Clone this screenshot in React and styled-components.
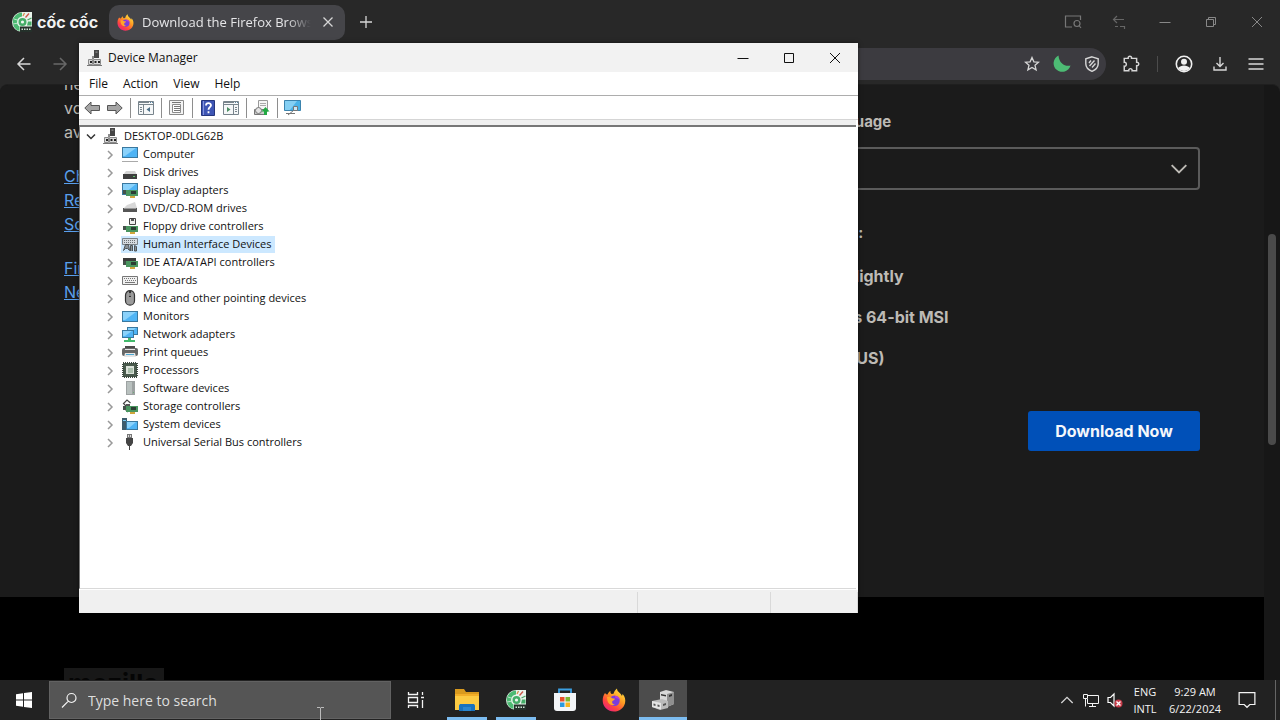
import styled, { createGlobalStyle, css } from "styled-components";

const GlobalStyle = createGlobalStyle`
  * { box-sizing: border-box; }
  body {
    margin: 0;
    font-family: "Open Sans", "Noto Sans", sans-serif;
    background: #000;
  }
  button, input, select { font: inherit; color: inherit; }
  button { border: 0; padding: 0; background: none; }
  svg { display: block; flex: none; }
  ul, dl, dd, p { margin: 0; padding: 0; }
`;

const center = css`
  display: flex;
  align-items: center;
  justify-content: center;
`;

const Desktop = styled.div`
  position: relative;
  display: flex;
  flex-direction: column;
  height: 100vh;
  overflow: hidden;
`;

/* ---------- browser ---------- */

const Browser = styled.div`
  flex: 1;
  min-height: 0;
  display: flex;
  flex-direction: column;
  background: #282828;
`;

const TabStrip = styled.div`
  display: flex;
  align-items: center;
  height: 44px;
  padding-left: 11px;
`;

const Brand = styled.div`
  display: flex;
  align-items: center;
  gap: 4px;
  width: 98px;
  color: #f2f2f2;
  font: 700 16px/24px Inter, sans-serif;
  white-space: nowrap;
`;

const Tab = styled.div`
  display: flex;
  align-items: center;
  width: 236px;
  height: 35px;
  padding: 0 8px;
  border-radius: 10px;
  background: #454549;
  color: #e6e6e8;
`;

const TabTitle = styled.span`
  flex: 1;
  margin: 0 8px;
  overflow: hidden;
  white-space: nowrap;
  font-size: 13px;
  mask-image: linear-gradient(to right, #000 86%, transparent);
`;

const IconButton = styled.button`
  ${center}
  flex: none;
  width: ${(props) => props.$width || 20}px;
  height: ${(props) => props.$height || 20}px;
  color: ${(props) => props.$color || "#d6d6d6"};
`;

const Spacer = styled.div`
  flex: 1;
`;

const NavBar = styled.div`
  display: flex;
  align-items: center;
  height: 40px;
  padding: 0 9px 0 6px;
`;

const UrlBar = styled.div`
  flex: 1;
  display: flex;
  align-items: center;
  justify-content: flex-end;
  height: 32px;
  margin-left: 60px;
  border-radius: 16px;
  background: #3c3b40;
`;

const Divider = styled.span`
  width: 1px;
  height: 16px;
  margin: 0 11px 0 1px;
  background: #4c4c4c;
`;

const Viewport = styled.div`
  flex: 1;
  min-height: 0;
  display: flex;
  overflow: hidden;
  border-top: 1px solid #1f1f1f;
  border-radius: 8px 8px 0 0;
  background: #171717;
`;

const Page = styled.div`
  flex: 1;
  overflow: hidden;
`;

const Columns = styled.main`
  display: grid;
  grid-template-columns: 1fr 1fr;
  gap: 64px;
  height: 512px;
  padding: 0 64px;
  background: #1b1b1b;
  color: #bdbab5;
  font: 16px/24px Inter, sans-serif;
`;

const Intro = styled.div`
  margin-top: -13px;
  p, ul { margin-bottom: 20px; }
  ul { list-style: none; }
  a { color: #5aa0ee; }
`;

const Form = styled.form`
  padding-top: 25px;
`;

const Label = styled.label`
  display: block;
  font-size: 15px;
  font-weight: 700;
`;

const SelectBox = styled.div`
  display: grid;
  align-items: center;
  margin: 13px 0 31px;
  select, svg { grid-area: 1 / 1; }
  svg { justify-self: end; margin-right: 12px; pointer-events: none; }
`;

const Select = styled.select`
  appearance: none;
  height: 43px;
  padding: 0 12px;
  border: 2px solid #5b5b5b;
  border-radius: 4px;
  background: #1b1b1b;
`;

const Summary = styled.dl`
  display: grid;
  grid-template-columns: 125px 1fr;
  row-gap: 17px;
  margin: 19px 0 41px;
  dd { font-weight: 700; }
`;

const Download = styled.button`
  display: block;
  width: 172px;
  height: 40px;
  margin-left: auto;
  border-radius: 3px;
  background: #0050b8;
  color: #f4f7fb;
  font-weight: 700;
`;

const Footer = styled.footer`
  height: 84px;
  padding: 71px 64px 0;
  background: #000;
  overflow: hidden;
`;

const FooterLogo = styled.div`
  width: 100px;
  height: 32px;
  padding-left: 4px;
  background: #181818;
  color: #050505;
  font: 700 26px/32px Inter, sans-serif;
`;

const ScrollTrack = styled.div`
  display: flex;
  justify-content: center;
  width: 16px;
  padding-top: 149px;
`;

const ScrollThumb = styled.div`
  width: 8px;
  height: 211px;
  border-radius: 4px;
  background: #4a4a4a;
`;

/* ---------- device manager ---------- */

const Window = styled.section`
  position: absolute;
  left: 79px;
  top: 43px;
  display: flex;
  flex-direction: column;
  width: 779px;
  height: 570px;
  background: #fff;
  color: #111;
  font-size: 11px;
  box-shadow: 0 0 4px rgba(0, 0, 0, 0.6);
`;

const TitleBar = styled.header`
  display: flex;
  align-items: center;
  height: 29px;
  padding-left: 8px;
  background: #f2f2f2;
`;

const Caption = styled.span`
  flex: 1;
  margin-left: 5px;
  font-size: 12px;
`;

const MenuBar = styled.nav`
  display: flex;
  align-items: center;
  gap: 15px;
  height: 24px;
  padding-left: 10px;
  border-bottom: 1px solid #adadad;
  font-size: 12px;
`;

const ToolBar = styled.div`
  display: flex;
  align-items: center;
  height: 24px;
  padding-left: 1px;
  border-bottom: 1px solid #d5d5d5;
`;

const ToolDivider = styled.span`
  width: 1px;
  height: 20px;
  margin: 0 3px 0 4px;
  background: #8e8e8e;
`;

const TreePane = styled.div`
  flex: 1;
  margin: 5px 2px 1px 0;
  border: 1px solid #777;
  border-top-width: 2px;
  border-right: 0;
  border-bottom-color: #d9d9d9;
  outline: 5px solid #f0f0f0;
  clip-path: inset(-5px 0 0 0);
`;

const Tree = styled.ul`
  list-style: none;
  padding-left: ${(props) => (props.$nested ? 19 : 3)}px;
`;

const Row = styled.div`
  display: flex;
  align-items: center;
  height: 18px;
`;

const Node = styled.span`
  display: flex;
  align-items: center;
  gap: 5px;
  height: 17px;
  margin-left: 3px;
  padding: 0 4px 0 1px;
  background: ${(props) => (props.$selected ? "#cce8ff" : "none")};
  white-space: nowrap;
`;

const NodeName = styled.span`
  line-height: 15px;
  padding-bottom: 2px;
`;

const StatusBar = styled.footer`
  display: grid;
  grid-template-columns: 1fr 133px 87px;
  height: 23px;
  background: #f0f0f0;
  span { border-right: 1px solid #d9d9d9; margin-top: 2px; }
`;

/* ---------- taskbar ---------- */

const TaskBar = styled.footer`
  display: flex;
  align-items: stretch;
  height: 40px;
  background: #222;
  color: #f3f3f3;
`;

const SearchBox = styled.label`
  display: flex;
  align-items: center;
  gap: 11px;
  width: 342px;
  margin: 1px;
  padding-left: 11px;
  border: 1px solid #626262;
  background: #555;
  input {
    flex: 1;
    min-width: 0;
    padding: 0;
    border: 0;
    outline: 0;
    background: none;
    font-size: 14px;
  }
  input::placeholder { color: #dedede; opacity: 1; }
`;

const Apps = styled.div`
  display: flex;
  gap: 1px;
  margin-left: 3px;
`;

const TaskButton = styled.button`
  ${center}
  width: 48px;
  background: ${(props) =>
    props.$active
      ? "linear-gradient(#7cbcf0, #7cbcf0) bottom / 48px 3px no-repeat #4c4c4c"
      : props.$open
        ? "linear-gradient(#7cbcf0, #7cbcf0) bottom / 40px 3px no-repeat"
        : "none"};
`;

const TrayText = styled.button`
  width: ${(props) => props.$width}px;
  font-size: 11px;
  line-height: 17px;
  text-align: center;
`;

const PeekEdge = styled.button`
  width: 5px;
  margin-left: 8px;
  border-left: 1px solid #666;
`;

const Pointer = styled.svg`
  position: absolute;
  left: 316px;
  bottom: -5px;
`;

/* ---------- drawings ---------- */

const Line = ({ d, size = 16, box = 16, w = 1 }) => (
  <svg width={size} height={size} viewBox={`0 0 ${box} ${box}`} fill="none" stroke="currentColor" strokeWidth={w}>
    <path d={d} />
  </svg>
);

const Firefox = ({ size }) => (
  <svg width={size} height={size} viewBox="0 0 24 24">
    <defs>
      <linearGradient id="flame" x1="0.85" y1="0.05" x2="0.2" y2="0.95">
        <stop offset="0" stopColor="#ffe545" />
        <stop offset="0.4" stopColor="#ff9a22" />
        <stop offset="0.75" stopColor="#ff4340" />
        <stop offset="1" stopColor="#e8247c" />
      </linearGradient>
    </defs>
    <path fill="url(#flame)" d="M3 5c1 1 1.700 1.500 2.500 1.500C6 5 7 3.500 8.500 3c-.3 1.200 0 2.200 1 3l2-.2C12 4 13 2 15 .5c0 2 1 3 2.500 4.300C18.500 5.700 19.500 7 20 8l.6-2C23 8.500 23.800 12 23 15.200 21.700 20.200 17.300 23.500 12 23.500 6 23.500 1 19 .7 13 .6 10 1.300 7 3 5z" />
    <circle cx="12.500" cy="12.800" r="5.200" fill="#7b3ddb" />
    <path fill="#ffa52a" d="M5 9c2-.5 4 0 5 1.300l3 .4c-.3 1.400-2 1.700-2.700 2.300-.6 2 .4 3.600 2.700 3.600-3.500 1.600-7-.6-7.600-4z" />
    <path fill="#b83be0" d="M13 8c3 0 5 2 5 5-.7-2-2.500-3-4.500-3z" />
  </svg>
);

const CocCoc = ({ size }) => (
  <svg width={size} height={size} viewBox="0 0 22 22">
    <path fill="#e9f4ec" d="M11 1h10v20H11A10 10 0 0 1 11 1z" />
    <path fill="#4dba73" d="M11 1.500a9.500 9.500 0 0 0-2.500 18.600V15.500a5.500 5.500 0 0 1 2.500-10z" />
    <path d="M3 8l5 1.500M2 13l5.500-1" stroke="#d7efdf" strokeWidth=".8" />
    <circle cx="11.500" cy="11" r="4" fill="#45ad68" />
    <circle cx="11.500" cy="11" r="1.600" fill="#eef7f0" />
    <path stroke="#d98b4a" strokeWidth="1.300" d="M12 5l1.500-3" />
    <path stroke="#cc5548" strokeWidth="1.300" d="M14.500 6.500L18 2.500" />
    <path stroke="#50a869" strokeWidth="1.300" d="M16.500 9l4-2" />
    <path fill="#45ad68" d="M17 10.500h3.500v4H16z" />
    <path fill="#24302a" d="M9 15.500h12V21H9z" />
    <path stroke="#cfe2d5" strokeWidth="1.500" strokeDasharray="1.500 1" d="M10.500 18.200h9.500" />
  </svg>
);

const Pc = () => (
  <svg width="16" height="16" viewBox="0 0 16 16">
    <path fill="#454545" d="M7 0h5v8H7z" />
    <path fill="#8c8c8c" d="M8.500 1.500h2v1.200h-2zM5 6h2v3H5z" />
    <path fill="#d8d8d8" stroke="#8a8a8a" d="M1.500 9.500h4v5h-4zM6.500 9.500h7v5h-7z" />
    <path fill="#222" d="M3 11h2v2H3zM7.500 11h2v2h-2zM11 11h2v2h-2z" />
    <path fill="#777" d="M0 15h15v1H0z" />
  </svg>
);

const Screen = ({ x = 0, y = 2, w = 16, h = 11 }) => (
  <>
    <rect x={x + 0.5} y={y + 0.5} width={w - 1} height={h - 1} fill="#4fb4f5" stroke="#3a789f" />
    <path fill="#8bd2fb" d={`M${x + 1} ${y + 1}h${w - 3}l-${w - 5} ${h - 3}h-2z`} />
  </>
);

const Card = ({ y = 7 }) => (
  <>
    <path fill="#44514a" d={`M1 ${y}h3v4H1z`} />
    <path fill="#4a9660" d={`M4 ${y}h12v6H4z`} />
    <path fill="#2c3d33" d={`M9 ${y + 1}h5v3H9z`} />
    <path fill="#d0a63c" d={`M8 ${y + 6}h5v2H8z`} />
  </>
);

const deviceDrawings = {
  computer: <><Screen y={1} /><path stroke="#aaa" d="M0 15.500h16" /></>,
  disk: <><path fill="#d4d4d4" d="M4 7h9l2 4H1z" /><path fill="#3e3e3e" d="M1 10h14v5H1z" /><path fill="#61c46c" d="M11 12h2v1h-2z" /></>,
  display: <><Screen y={1} h={12} /><Card y={8} /></>,
  dvd: <><path fill="#d8d8d8" d="M5 5l8-3 2 6H2z" /><path fill="#555" d="M1 8h14v4H1z" /><path fill="#999" d="M2 8h12v1H2z" /></>,
  floppy: <><path fill="#eee" stroke="#454545" d="M7.500.5h6v6h-6z" /><path fill="#555" d="M9 1h3v2H9z" /><Card y={8} /></>,
  hid: <><path fill="#d6dbe0" stroke="#7b8288" d="M.5 2.500h15v6H.5z" /><path stroke="#6d7378" strokeDasharray="1 1" d="M2 4.500h12M2 6.500h12" /><path fill="#8b9298" stroke="#4d5357" d="M1.500 14.500l2-6h3l1 6-2-2h-2zM8.500 15v-5.500h2V15M12.500 15V9.500l2 1V15z" /></>,
  ide: <><path fill="#3b3b3b" d="M1 4h13v3H1z" /><Card y={7} /></>,
  keyboard: <><path fill="#f1f1f1" stroke="#777" d="M.5 4.500h15v8H.5z" /><path stroke="#777" strokeDasharray="1 1" d="M2 6.500h12M3 8.500h11" /><path stroke="#777" d="M3 10.500h10" /></>,
  mouse: <><rect x="3.500" y=".7" width="9" height="14.500" rx="4.500" fill="#9b9b9b" stroke="#333" strokeWidth="1.200" /><path fill="#333" d="M7 1h2v6H7z" /><path fill="#ddd" d="M7.500 3h1v3h-1z" /></>,
  monitor: <Screen y={3} />,
  network: <><Screen x={5} y={1} w={11} h={8} /><Screen x={0} y={4} w={12} h={8} /><path fill="#43b96c" d="M2 14h11v2H2zM6 12h3v2H6z" /></>,
  printer: <><path fill="#4b4b4b" d="M3 2h10v3H3z" /><rect y="4" width="16" height="8" rx="2" fill="#666" /><path fill="#e5e5e5" d="M3 5h10v1H3zM3 9h10l1 4H2z" /><path fill="#4ba7d2" d="M4 10h8v1H4z" /></>,
  cpu: <><path fill="#495a4d" d="M1 1h14v14H1z" /><path fill="none" stroke="#3c483f" strokeWidth="2" strokeDasharray="1 1" d="M1 1h14v14H1z" /><path fill="#dce3db" d="M4 4h8v8H4z" /><path fill="#abc0ad" d="M6 6h5v5H6z" /></>,
  software: <><path fill="#9da2a2" d="M4 1h9v14H4z" /><path fill="#b8c0be" d="M5 2h5v12H5z" /><path fill="#6eac7a" d="M11 12h1v1h-1z" /></>,
  storage: <><path fill="none" stroke="#444" strokeWidth="1.200" d="M5 9L1.500 5.500 5 2l3.500 3M3 11l3 3" /><path fill="#555" d="M4 6h4v2H4z" /><Card y={8} /></>,
  system: <><path fill="#3e5c6d" d="M0 2h5v12H0z" /><path fill="#7bcbf4" d="M1 4h3v1H1z" /><Screen x={4} y={5} w={12} h={9} /></>,
  usb: <><path fill="#777" d="M5 0h5v4H5z" /><path fill="#444" d="M4 4h7v5l-2 3H6L4 9zM7 12h1v4H7z" /><path fill="#ddd" d="M6 1h1v2H6zM8 1h1v2H8z" /></>,
};

const devices = [
  ["computer", "Computer"],
  ["disk", "Disk drives"],
  ["display", "Display adapters"],
  ["dvd", "DVD/CD-ROM drives"],
  ["floppy", "Floppy drive controllers"],
  ["hid", "Human Interface Devices"],
  ["ide", "IDE ATA/ATAPI controllers"],
  ["keyboard", "Keyboards"],
  ["mouse", "Mice and other pointing devices"],
  ["monitor", "Monitors"],
  ["network", "Network adapters"],
  ["printer", "Print queues"],
  ["cpu", "Processors"],
  ["software", "Software devices"],
  ["storage", "Storage controllers"],
  ["system", "System devices"],
  ["usb", "Universal Serial Bus controllers"],
];

const Arrow = ({ flip }) => (
  <svg width="16" height="14" viewBox="0 0 16 14">
    <path
      fill="#a5a5a5"
      stroke="#555"
      transform={flip ? "matrix(-1 0 0 1 16 0)" : undefined}
      d="M.8 7L7 1v3.500h8.500v5H7V13z"
    />
  </svg>
);

const Panel = ({ children }) => (
  <svg width="16" height="14" viewBox="0 0 16 14">
    <path fill="#f5f7f8" stroke="#78848c" d="M.5.5h15v13H.5z" />
    <path stroke="#78848c" d="M1 3.500h14M1 1.500h10" />
    <path stroke="#5a87a5" d="M12 1.500h3" strokeDasharray="1 1" />
    {children}
  </svg>
);

const tools = [
  ["Back", <Arrow />],
  ["Forward", <Arrow flip />],
  null,
  ["Show/Hide Console Tree", <Panel><path stroke="#78848c" d="M5.500 4v10M2 6.500h2M2 8.500h2M2 10.500h2" /><path fill="#4a6f88" d="M12 6v5L8.500 8.500z" /></Panel>],
  null,
  ["Properties", <svg width="15" height="15" viewBox="0 0 15 15"><path fill="#f4f4f4" stroke="#8b8b8b" d="M.5.5h14v14H.5z" /><path fill="#fff" stroke="#8b8b8b" d="M3.500 4.500h8v8h-8z" /><path stroke="#777" d="M3 2.500h9M5 6.500h6M5 8.500h6M5 10.500h6" /></svg>],
  null,
  ["Help", <svg width="14" height="16" viewBox="0 0 14 16"><path fill="#3e55b4" stroke="#26367d" d="M.5.500h13v15H.5z" /><path stroke="#8494db" d="M2.500 1v14" /><path fill="none" stroke="#fff" strokeWidth="1.800" d="M5 5.500c0-3 5-3 5-.3 0 2-2.500 2-2.500 4.600M7.500 11.300v2" /></svg>],
  ["Show/Hide Action Pane", <Panel><path stroke="#78848c" d="M10.500 4v10M12 6.500h2M12 8.500h2M12 10.500h2" /><path fill="#4a8d62" d="M4 6v5l3.500-2.500z" /></Panel>],
  null,
  ["Scan for hardware changes", <svg width="17" height="16" viewBox="0 0 17 16"><path fill="#f6f6f6" stroke="#999" d="M5.500.5h9v11h-9z" /><path stroke="#aaa" d="M7 3.500h6M7 5.500h6" /><path fill="#ccc" stroke="#777" d="M1.500 9.500h10v5h-10z" /><circle cx="5.500" cy="10.500" r="3" fill="#e4e4e4" stroke="#777" /><path fill="#22a943" d="M12.500 7l4 4.500h-2.500V15h-3v-3.500H8.500z" /></svg>],
  null,
  ["Devices", <svg width="17" height="16" viewBox="0 0 17 16"><path fill="#48b2e8" stroke="#3b83ad" d="M.5.5h16v10H.5z" /><path fill="#84cff3" d="M1 1h12L6 10H1z" /><path stroke="#777" d="M2 13.500h9" /><path fill="#c9e7f5" stroke="#777" d="M9.500 6.500h4v4h-4zM9.500 10.500L4 15" /></svg>],
];

const DeviceManager = () => (
  <Window aria-label="Device Manager">
    <TitleBar>
      <Pc />
      <Caption>Device Manager</Caption>
      <IconButton aria-label="Minimize" $width={46} $color="#111"><Line d="M2.500 8.500h11" /></IconButton>
      <IconButton aria-label="Maximize" $width={46} $color="#111"><Line d="M3.500 3.500h9v9h-9z" /></IconButton>
      <IconButton aria-label="Close" $width={46} $color="#111"><Line d="M3 3l10 10M13 3L3 13" /></IconButton>
    </TitleBar>
    <MenuBar>
      {["File", "Action", "View", "Help"].map((item) => <button key={item}>{item}</button>)}
    </MenuBar>
    <ToolBar>
      {tools.map((tool, i) =>
        tool ? (
          <IconButton key={i} aria-label={tool[0]} $width={23}>{tool[1]}</IconButton>
        ) : (
          <ToolDivider key={i} />
        )
      )}
    </ToolBar>
    <TreePane>
      <Tree>
        <li>
          <Row>
            <IconButton aria-label="Collapse" $width={16} $height={16} $color="#333">
              <Line d="M4 6.500l4 4 4-4" w={1.500} />
            </IconButton>
            <Node><Pc /><NodeName>DESKTOP-0DLG62B</NodeName></Node>
          </Row>
          <Tree $nested>
            {devices.map(([icon, name]) => (
              <li key={name}>
                <Row>
                  <IconButton aria-label={`Expand ${name}`} $width={16} $height={16} $color="#999">
                    <Line d="M6 5l4 4-4 4" w={1.500} />
                  </IconButton>
                  <Node $selected={icon === "hid"}>
                    <svg width="16" height="16" viewBox="0 0 16 16">{deviceDrawings[icon]}</svg>
                    <NodeName>{name}</NodeName>
                  </Node>
                </Row>
              </li>
            ))}
          </Tree>
        </li>
      </Tree>
    </TreePane>
    <StatusBar><span /><span /><span /></StatusBar>
  </Window>
);

const BrowserWindow = () => (
  <Browser>
    <TabStrip>
      <Brand><CocCoc size={22} />cốc cốc</Brand>
      <Tab>
        <Firefox size={17} />
        <TabTitle>Download the Firefox Browse</TabTitle>
        <IconButton aria-label="Close tab" $width={18}><Line d="M3.500 3.500l9 9M12.500 3.500l-9 9" w={1.300} /></IconButton>
      </Tab>
      <IconButton aria-label="New tab" $width={42}><Line d="M8 2v12M2 8h12" w={1.300} /></IconButton>
      <Spacer />
      <IconButton aria-label="Search tabs" $width={46} $color="#777"><Line size={18} box={18} w={1.200} d="M8 14H1.500V3h15v4M16 10.500a3 3 0 1 0-6 0 3 3 0 0 0 6 0zM15 12.500l2 2.500" /></IconButton>
      <IconButton aria-label="Undo" $width={46} $color="#666"><Line w={1.200} d="M13 5.500H2M6 2L2.500 5.500 6 9M4 12.500h3M9 12.500h5M13.500 12v3" /></IconButton>
      <IconButton aria-label="Minimize browser" $width={46} $color="#888"><Line d="M2.500 8.500h11" /></IconButton>
      <IconButton aria-label="Restore browser" $width={46} $color="#888"><Line d="M3.500 5.500h7v7h-7zM5.500 5.500v-2h7v7h-2" /></IconButton>
      <IconButton aria-label="Close browser" $width={46} $color="#888"><Line d="M3 3l10 10M13 3L3 13" /></IconButton>
    </TabStrip>
    <NavBar>
      <IconButton aria-label="Back" $width={36}><Line d="M14.500 8H2M8 2L2 8l6 6" w={1.500} /></IconButton>
      <IconButton aria-label="Forward" $width={36} $color="#686868"><Line d="M1.500 8H14M8 2l6 6-6 6" w={1.500} /></IconButton>
      <UrlBar>
        <IconButton aria-label="Bookmark" $width={30}><Line w={1.300} d="M8 1.500l1.900 4.300 4.600.4-3.500 3.100 1.100 4.600L8 11.400l-4.100 2.500L5 9.300 1.500 6.200l4.600-.4z" /></IconButton>
        <IconButton aria-label="Night mode" $width={30}>
          <svg width="18" height="18" viewBox="0 0 18 18"><path fill="#4dbb74" d="M5.500.5A8.600 8.600 0 1 0 17.500 10.500C13 12 6 9 5.500.5z" /></svg>
        </IconButton>
        <IconButton aria-label="Ad block" $width={29}><Line w={1.400} d="M8 .8l6.200 2v5c0 3.500-2.500 6-6.200 7.500C4.300 13.800 1.800 11.300 1.800 7.800v-5zM5 7l2-2.500M5.500 10l5-5.500M8 11.500l3.500-4" /></IconButton>
      </UrlBar>
      <IconButton aria-label="Extensions" $width={50}><Line size={18} w={1.300} d="M2 3h3.500c-.5-2.500 3.500-2.500 3 0H13v3.500c2.500-.5 2.500 3.500 0 3V14H9c.5-2.500-3.500-2.500-3 0H2v-4c2.500.5 2.500-4 0-3.500z" /></IconButton>
      <Divider />
      <IconButton aria-label="Profile" $width={30}>
        <svg width="18" height="18" viewBox="0 0 18 18"><circle cx="9" cy="9" r="7.700" fill="none" stroke="#f0f0f0" strokeWidth="1.600" /><circle cx="9" cy="6.800" r="3" fill="#f0f0f0" /><path fill="#f0f0f0" d="M3 13c3-3.500 9-3.500 12 0-3 4-9 4-12 0z" /></svg>
      </IconButton>
      <IconButton aria-label="Downloads" $width={42}><Line w={1.400} d="M8 1v9M4.500 7L8 10.500 11.500 7M2 10.500V14h12v-3.500" /></IconButton>
      <IconButton aria-label="Menu" $width={30}><Line w={1.400} d="M.5 3h15M.5 8h15M.5 13h15" /></IconButton>
    </NavBar>
    <Viewport>
      <Page>
        <Columns>
          <Intro>
            <p>ne<br />vo<br />av</p>
            <ul>
              <li><a href="#check">Ch</a></li>
              <li><a href="#release">Re</a></li>
              <li><a href="#source">So</a></li>
            </ul>
            <ul>
              <li><a href="#firefox">Fir</a></li>
              <li><a href="#need">Ne</a></li>
            </ul>
          </Intro>
          <Form onSubmit={(e) => e.preventDefault()}>
            <Label htmlFor="language">Select your preferred language</Label>
            <SelectBox>
              <Select id="language"><option>English (US)</option></Select>
              <Line size={18} w={1.700} d="M1.500 4.500L8 11l6.500-6.500" />
            </SelectBox>
            <Label as="p">You are about to download:</Label>
            <Summary>
              <dt>Browser:</dt><dd>Firefox Nightly</dd>
              <dt>Platform:</dt><dd>Windows 64-bit MSI</dd>
              <dt>Language:</dt><dd>English (US)</dd>
            </Summary>
            <Download>Download Now</Download>
          </Form>
        </Columns>
        <Footer><FooterLogo>mozilla</FooterLogo></Footer>
      </Page>
      <ScrollTrack><ScrollThumb /></ScrollTrack>
    </Viewport>
  </Browser>
);

const App = () => (
  <Desktop>
    <GlobalStyle />
    <BrowserWindow />
    <DeviceManager />
    <TaskBar>
      <TaskButton aria-label="Start">
        <svg width="16" height="16" viewBox="0 0 16 16"><path fill="#fff" d="M0 2.200l7-1v6.300H0zM8 1.100L16 0v7.500H8zM0 8.500h7v6.300l-7-1zM8 8.500h8V16l-8-1.100z" /></svg>
      </TaskButton>
      <SearchBox>
        <Line w={1.200} d="M15 6A4.500 4.500 0 1 1 6 6a4.500 4.500 0 0 1 9 0zM7.300 9.200L1 15.500" />
        <input type="text" placeholder="Type here to search" aria-label="Type here to search" />
      </SearchBox>
      <TaskButton aria-label="Task View"><Line size={18} box={18} w={1.300} d="M1.500 1v2.500h9V1M1.500 6.500h9v5h-9zM1.500 17v-2.500h9V17M15.500 1v3M15.500 9v8M14 6.500h3" /></TaskButton>
      <Apps>
        <TaskButton aria-label="File Explorer" $open>
          <svg width="26" height="22" viewBox="0 0 26 22"><path fill="#d99a1e" d="M1 0h9l2 3h13v6H1z" /><path fill="#fccb43" d="M1 5h24v16H1z" /><path fill="#f2ae28" d="M1 5h24v2H1z" /><path fill="#1972bd" d="M5 22v-5c0-1.500 1-2 2-2h12c1 0 2 .5 2 2v5h-4v-3H9v3z" /><path fill="#2a86cf" d="M9 18h8v4H9z" /></svg>
        </TaskButton>
        <TaskButton aria-label="Cốc Cốc" $open><CocCoc size={22} /></TaskButton>
        <TaskButton aria-label="Microsoft Store">
          <svg width="24" height="24" viewBox="0 0 24 24"><path fill="none" stroke="#3b9fe2" strokeWidth="1.800" d="M6 6V1.500h12V6" /><path fill="#f3f5f7" d="M1 5h22v15a3 3 0 0 1-3 3H4a3 3 0 0 1-3-3z" /><path fill="#e8512b" d="M7 9h4.500v4.500H7z" /><path fill="#7db72f" d="M12.500 9H17v4.500h-4.500z" /><path fill="#2a9adf" d="M7 14.500h4.500V19H7z" /><path fill="#f6b51e" d="M12.500 14.500H17V19h-4.500z" /></svg>
        </TaskButton>
        <TaskButton aria-label="Firefox"><Firefox size={24} /></TaskButton>
        <TaskButton aria-label="Device Manager" $active>
          <svg width="24" height="24" viewBox="0 0 24 24"><path fill="#d8d8d8" d="M9 4l6-2 8 2v12l-7 3-7-3z" /><path fill="#8f8f8f" d="M16 6l7-2v12l-7 3z" /><path fill="#333" d="M10 6l5 1v1.500l-5-1zM18 7l3-1v2l-3 1z" /><path fill="#bbb" d="M1 13l10-2 6 2v7l-8 2-8-3z" /><path fill="#e4e4e4" d="M1 13l9 2v6.500L1 19z" /><path fill="#555" d="M2.500 15.500l2 .5v2l-2-.5zM6.500 16.500l2 .5v2l-2-.5zM12 16l3-1v2l-3 1z" /></svg>
        </TaskButton>
      </Apps>
      <Spacer />
      <IconButton aria-label="Show hidden icons" $width={24} $height={40}><Line size={14} d="M1.500 11.500L8 5l6.500 6.500" w={1.500} /></IconButton>
      <IconButton aria-label="Network" $width={24} $height={40} $color="#f3f3f3"><Line d="M5 3.500h10.500v8H4.500V7M.5 2.500h4v4h-4zM2.500 7v7.500M9.500 12v2.500M6 14.500h7" /></IconButton>
      <IconButton aria-label="Volume muted" $width={24} $height={40}>
        <svg width="18" height="16" viewBox="0 0 18 16"><path fill="none" stroke="#fff" strokeWidth="1.200" d="M2 5.500h2.500L8 2v12l-3.500-3.500H2z" /><circle cx="12.500" cy="11.500" r="4" fill="#c63b49" /><path stroke="#fff" strokeWidth="1.400" d="M10.500 9.500l4 4M14.500 9.500l-4 4" /></svg>
      </IconButton>
      <TrayText $width={36}>ENG<br />INTL</TrayText>
      <TrayText $width={64}>9:29 AM<br />6/22/2024</TrayText>
      <IconButton aria-label="Notifications" $width={40} $height={40} $color="#f3f3f3"><Line size={18} w={1.100} d="M1 1.500h14v10.500h-4.500L8 14.500 5.500 12H1z" /></IconButton>
      <PeekEdge aria-label="Show desktop" />
    </TaskBar>
    <Pointer width="9" height="18" viewBox="0 0 9 18" aria-hidden="true">
      <path d="M1 .5h3l.5.500.5-.5h3M4.500 1v16" fill="none" stroke="#bbb" />
    </Pointer>
  </Desktop>
);

export default App;
